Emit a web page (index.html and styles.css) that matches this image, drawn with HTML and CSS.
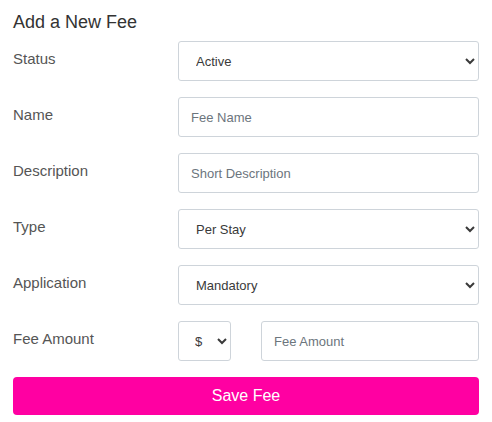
FILE: index.html
```html
<!DOCTYPE html>
<html lang="en">
<head>
  <meta charset="UTF-8">
  <meta name="viewport" content="width=device-width, initial-scale=1.0">
  <title>Add a New Fee</title>
  <link rel="stylesheet" href="styles.css">
</head>
<body>
  <div class="container">
    <h1>Add a New Fee</h1>
    <form class="fee-form">
      <label for="status">Status</label>
      <select id="status">
        <option>Active</option>
        <option>Inactive</option>
      </select>

      <label for="name">Name</label>
      <input type="text" id="name" placeholder="Fee Name" />

      <label for="desc">Description</label>
      <input type="text" id="desc" placeholder="Short Description" />

      <label for="type">Type</label>
      <select id="type">
        <option>Per Stay</option>
        <option>Per Night</option>
      </select>

      <label for="application">Application</label>
      <select id="application">
        <option>Mandatory</option>
        <option>Optional</option>
      </select>

      <label for="amount">Fee Amount</label>
      <div class="amount-row">
        <select id="currency" class="currency">
          <option>$</option>
          <option>%</option>
        </select>
        <input type="number" id="amount" placeholder="Fee Amount" />
      </div>

      <button type="button" class="save-btn">Save Fee</button>
    </form>
  </div>
</body>
</html>
```

FILE: styles.css
```css
body {
  font-family: "Liberation Sans", Arial, sans-serif;
  margin: 0;
  padding: 0;
  background: #ffffff;
  color: #333;
}
.container {
  padding: 10px 13px 13px 13px;
  width: 466px;
}
h1 {
  font-size: 18px;
  font-weight: normal;
  line-height: 24px;
  margin: 0 0 7px 0;
  color: #333;
}
.fee-form {
  display: grid;
  grid-template-columns: 165px 301px;
  row-gap: 16px;
}
label {
  font-size: 15px;
  line-height: 17px;
  padding-top: 9px;
  color: #555;
}
input, select {
  box-sizing: border-box;
  height: 40px;
  width: 100%;
  font-family: "Liberation Sans", Arial, sans-serif;
  font-size: 13px;
  color: #3a3a3a;
  background: #fff;
  border: 1px solid #ced4da;
  border-radius: 3px;
  outline: none;
  margin: 0;
}
input {
  padding: 0 12px;
}
input::placeholder {
  color: #6c757d;
}
select {
  padding: 0 8px 0 13px;
}
.amount-row {
  display: flex;
  gap: 30px;
}
.amount-row .currency {
  width: 53px;
  flex: none;
  padding: 0 6px 0 12px;
}
.amount-row input {
  flex: 1;
  -moz-appearance: textfield;
}
.amount-row input::-webkit-inner-spin-button {
  -webkit-appearance: none;
}
.save-btn {
  grid-column: 1 / 3;
  height: 38px;
  background: #ff00a2;
  color: white;
  font-family: "Liberation Sans", Arial, sans-serif;
  font-size: 16px;
  border: none;
  border-radius: 4px;
  cursor: pointer;
}
```
